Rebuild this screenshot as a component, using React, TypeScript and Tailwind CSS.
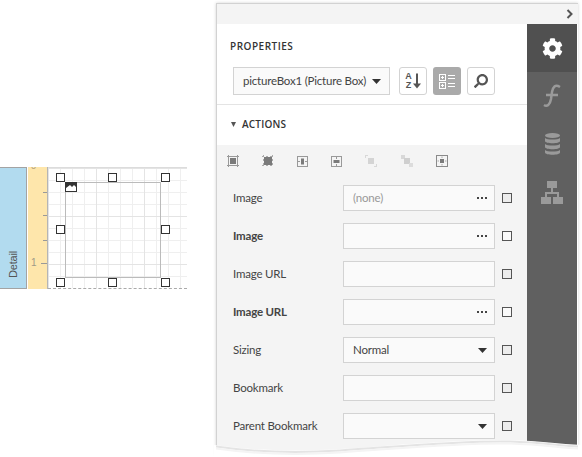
import { FaCog, FaSearch } from "react-icons/fa";

const rows = [
  { label: "Image", value: "(none)", muted: true, kind: "dots" },
  { label: "Image", bold: true, kind: "dots" },
  { label: "Image URL" },
  { label: "Image URL", bold: true, kind: "dots" },
  { label: "Sizing", value: "Normal", kind: "select" },
  { label: "Bookmark" },
  { label: "Parent Bookmark", kind: "select" },
];

const handleSpots = [
  "left-[56px] top-[6px]",
  "left-[108px] top-[6px]",
  "left-[161px] top-[6px]",
  "left-[56px] top-[58px]",
  "left-[161px] top-[58px]",
  "left-[56px] top-[111px]",
  "left-[108px] top-[111px]",
  "left-[161px] top-[111px]",
];

function Caret({ className = "" }: { className?: string }) {
  return (
    <svg width="9" height="5" viewBox="0 0 9 5" className={className}>
      <path d="M0 0h9L4.5 5z" fill="#333" />
    </svg>
  );
}

function Dots() {
  return (
    <div className="flex gap-[2px]">
      <span className="w-[2px] h-[2px] bg-[#444]" />
      <span className="w-[2px] h-[2px] bg-[#444]" />
      <span className="w-[2px] h-[2px] bg-[#444]" />
    </div>
  );
}

function Designer() {
  return (
    <div className="relative w-[187px] h-[122px] mt-[167px] shrink-0 flex">
      <div className="w-[27px] border border-l-0 border-[#a3a3a3] bg-[#b2dbef] flex items-end justify-center pb-[10px]">
        <span className="[writing-mode:vertical-rl] rotate-180 text-[11px] leading-none text-[#555] font-['Liberation_Sans',sans-serif]">Detail</span>
      </div>
      <div className="relative w-[20px] ml-[1px] bg-[#fee6ab] border-r border-[#b5b5b5] overflow-hidden font-['Liberation_Sans',sans-serif]">
        <span className="absolute left-[3px] top-[-5px] text-[9px] leading-none text-[#a89878]">0</span>
        <span className="absolute left-[3px] top-[91px] text-[10px] leading-none text-[#a09a88]">1</span>
        <span className="absolute right-0 top-[25px] w-[4px] h-[1px] bg-[#999]" />
        <span className="absolute right-0 top-[48px] w-[4px] h-[1px] bg-[#999]" />
        <span className="absolute right-0 top-[73px] w-[4px] h-[1px] bg-[#999]" />
        <span className="absolute right-0 top-[96px] w-[6px] h-[1px] bg-[#999]" />
      </div>
      <div className="flex-1 flex flex-col">
        <div className="flex-1 border-t border-[#dcdcdc] bg-white bg-[linear-gradient(#e4e4e4_1px,transparent_1px),linear-gradient(90deg,#e4e4e4_1px,transparent_1px),linear-gradient(#efefef_1px,transparent_1px),linear-gradient(90deg,#efefef_1px,transparent_1px)] bg-[size:48px_48px,48px_48px,12px_12px,12px_12px]" />
        <div className="border-b border-dashed border-[#aaa]" />
      </div>
      <div className="absolute left-[65px] top-[15px] w-[96px] h-[96px] border border-[#bbb]" />
      <svg className="absolute left-[65px] top-[15px]" width="13" height="10" viewBox="0 0 13 10">
        <rect x="0.5" y="0.5" width="11" height="9" fill="#fff" stroke="#333" />
        <path d="M1 1h10v4L9 3 7 5 5 3 1 6z" fill="#333" />
      </svg>
      {handleSpots.map((spot) => (
        <span key={spot} className={`absolute ${spot} w-[7px] h-[7px] box-content border border-[#333] bg-white`} />
      ))}
    </div>
  );
}

function ActionIcons() {
  const c = "#7a7a7a";
  return (
    <div className="flex items-center h-[32px] pl-[4px] gap-[23px]">
      <svg width="12" height="12" viewBox="0 0 12 12">
        <path d="M0 1.500h12M0 10.500h12M1.500 0v12M10.500 0v12" stroke="#999" />
        <rect x="3" y="3" width="6" height="6" fill={c} />
      </svg>
      <svg width="12" height="12" viewBox="0 0 12 12">
        <path d="M0 1.500h12M0 10.500h12M1.500 0v12M10.500 0v12" stroke="#aaa" strokeDasharray="2 2" />
        <rect x="2" y="2" width="8" height="8" fill={c} />
      </svg>
      <svg width="11" height="11" viewBox="0 0 11 11">
        <rect x="0.5" y="0.5" width="10" height="10" fill="none" stroke="#999" />
        <rect x="4" y="2.500" width="3" height="6" fill={c} />
        <path d="M1 5.500h2M8 5.500h2" stroke="#999" />
      </svg>
      <svg width="11" height="11" viewBox="0 0 11 11">
        <rect x="0.5" y="0.5" width="10" height="10" fill="none" stroke="#999" />
        <rect x="2.500" y="4" width="6" height="3" fill={c} />
        <path d="M5.500 1v2M5.500 8v2" stroke="#999" />
      </svg>
      <svg width="12" height="12" viewBox="0 0 12 12">
        <path d="M0 0h3v1H1v2H0zM12 12H9v-1h2V9h1z" fill="#d8d8d8" />
        <rect x="3" y="3" width="6" height="6" fill="#d4d4d4" />
      </svg>
      <svg width="12" height="12" viewBox="0 0 12 12" className="ml-[1px]">
        <rect x="0" y="0" width="4" height="4" fill="#d8d8d8" />
        <rect x="3" y="3" width="6" height="6" fill="#cfcfcf" />
        <rect x="8" y="8" width="4" height="4" fill="#dcdcdc" />
      </svg>
      <svg width="12" height="12" viewBox="0 0 12 12">
        <rect x="0.5" y="0.5" width="11" height="11" fill="none" stroke="#8a8a8a" />
        <rect x="4" y="4" width="4" height="4" fill={c} />
        <path d="M6 1.500v1.500M6 9v1.500M1.500 6H3M9 6h1.500" stroke="#aaa" />
      </svg>
    </div>
  );
}

function PropertyRow({ row }: { row: (typeof rows)[number] }) {
  return (
    <div className="flex items-center h-[26px] mb-[12px]">
      <div className={`w-[110px] text-[#444] ${row.bold ? "font-bold text-[#333]" : ""}`}>{row.label}</div>
      <div className="w-[152px] h-[26px] border border-[#d3d3d3] bg-[#fafafa] flex items-center justify-between pl-[9px] pr-[7px]">
        <span className={row.muted ? "text-[#999]" : "text-[#444]"}>{row.value}</span>
        {row.kind === "dots" && <Dots />}
        {row.kind === "select" && <Caret />}
      </div>
      <span className={`ml-[7px] w-[10px] h-[10px] border border-[#555] ${row.bold ? "bg-[#fafafa]" : "bg-[#ececec]"}`} />
    </div>
  );
}

function Sidebar() {
  return (
    <div className="w-[50px] bg-[#606060] flex flex-col items-center">
      <div className="w-full h-[48px] bg-[#505050] flex items-center justify-center">
        <FaCog size={21} color="#fff" />
      </div>
      <div className="h-[48px] flex items-center justify-center">
        <svg width="18" height="24" viewBox="0 0 18 24" fill="none" stroke="#9a9a9a" strokeWidth="2.500">
          <path d="M17 3c-5-3-7 0-8 5l-1 7c-1 6-4 8-7 6M3 11h12" />
        </svg>
      </div>
      <div className="h-[48px] flex items-center justify-center">
        <svg width="15" height="22" viewBox="0 0 15 22" fill="#9a9a9a">
          <ellipse cx="7.500" cy="2.500" rx="7.500" ry="2.500" />
          <path d="M0 5c2 2 13 2 15 0v3c0 3-15 3-15 0zM0 11c2 2 13 2 15 0v3c0 3-15 3-15 0zM0 17c2 2 13 2 15 0v2.500c0 3-15 3-15 0z" />
        </svg>
      </div>
      <div className="h-[48px] flex items-center justify-center">
        <svg width="22" height="23" viewBox="0 0 22 23" fill="#9a9a9a">
          <rect x="6" y="0" width="10" height="7" />
          <rect x="0" y="16" width="10" height="7" />
          <rect x="12" y="16" width="10" height="7" />
          <path d="M10 7h2v4h6v5h-2v-3H6v3H4v-5h6z" />
        </svg>
      </div>
    </div>
  );
}

export default function App() {
  return (
    <div className="relative w-[582px] h-[457px] overflow-hidden bg-white flex text-[11.5px] tracking-[-0.2px] font-['Lato','Liberation_Sans',sans-serif]">
      <Designer />
      <div className="ml-[29px] mt-[3px] w-[362px] h-[452px] border-t border-l border-[#d2d2d2] shadow-[0_0_3px_rgba(0,0,0,0.18)] flex flex-col shrink-0">
        <div className="h-[20px] bg-[#f4f4f4] flex items-center justify-end pr-[5px]">
          <svg width="7" height="10" viewBox="0 0 7 10" fill="none" stroke="#555" strokeWidth="2">
            <path d="M1.500 1l4 4-4 4" />
          </svg>
        </div>
        <div className="flex flex-1">
          <div className="w-[310px] flex flex-col">
            <div className="h-[81px] bg-white border-b border-[#e4e4e4] pl-[13px]">
              <div className="pt-[16px] h-[43px] text-[10px] leading-[13px] font-['Open_Sans',sans-serif] font-semibold text-[#333] tracking-[0.5px]">PROPERTIES</div>
              <div className="flex items-center pl-[3px]">
                <div className="w-[157px] h-[28px] border border-[#d3d3d3] bg-[#fafafa] flex items-center justify-between pl-[9px] pr-[8px] text-[#444]">
                  <span className="whitespace-nowrap">pictureBox1 (Picture Box)</span>
                  <Caret />
                </div>
                <button className="ml-[9px] w-[28px] h-[28px] rounded-[3px] border border-[#d3d3d3] bg-white flex items-center justify-center gap-[1px]">
                  <span className="flex flex-col text-[9px] leading-[9px] font-bold text-[#555] font-['Liberation_Sans',sans-serif]">
                    <span>A</span>
                    <span>Z</span>
                  </span>
                  <svg width="8" height="16" viewBox="0 0 8 15">
                    <path d="M4 0v12" stroke="#555" strokeWidth="2" />
                    <path d="M0 10h8l-4 5z" fill="#555" />
                  </svg>
                </button>
                <button className="ml-[6px] w-[28px] h-[28px] rounded-[3px] bg-[#aaaaaa] flex items-center justify-center">
                  <svg width="16" height="15" viewBox="0 0 16 15" fill="none" stroke="#fff">
                    <rect x="0.5" y="0.5" width="6" height="6" />
                    <rect x="0.5" y="8.500" width="6" height="6" />
                    <path d="M2 3.500h3M3.500 2v3M2 11.500h3M3.500 10v3M9 1.500h7M9 4.500h7M9 9.500h7M9 12.500h7" />
                  </svg>
                </button>
                <button className="ml-[6px] w-[28px] h-[28px] rounded-[3px] border border-[#d3d3d3] bg-white flex items-center justify-center">
                  <FaSearch size={14} color="#555" className="-scale-x-100" />
                </button>
              </div>
            </div>
            <div className="h-[40px] pb-[2px] bg-white flex items-center pl-[14px] gap-[6px] text-[10px] font-['Open_Sans',sans-serif] font-semibold text-[#333] tracking-[0.2px]">
              <svg width="5" height="5" viewBox="0 0 5 5">
                <path d="M0 0h5L2.500 5z" fill="#555" />
              </svg>
              ACTIONS
            </div>
            <div className="flex-1 bg-[#f4f4f4] pl-[6px]">
              <ActionIcons />
              <div className="pt-[8px] pl-[10px]">
                {rows.map((row, i) => (
                  <PropertyRow key={i} row={row} />
                ))}
              </div>
            </div>
          </div>
          <Sidebar />
        </div>
      </div>
      <svg className="absolute left-0 bottom-0" width="582" height="20" viewBox="0 0 582 20">
        <path d="M214 8C250 13 290 15 340 12 400 8 460 2 510 3 540 4 560 7 582 8V20H214z" fill="#fff" />
        <path d="M216 9.500C250 14.500 290 16.500 340 13.500 400 9.500 460 3.500 510 4.500 540 5.500 560 8.500 578 9.500" fill="none" stroke="#e4e4e4" strokeWidth="2" />
        <path d="M216 11.500C250 16.500 290 18.500 340 15.500 400 11.500 460 5.500 510 6.500 540 7.500 560 10.500 578 11.500" fill="none" stroke="#f4f4f4" strokeWidth="2" />
      </svg>
    </div>
  );
}
